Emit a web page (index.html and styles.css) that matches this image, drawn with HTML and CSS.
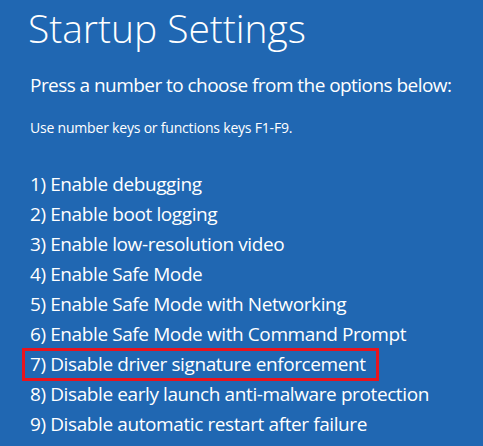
FILE: index.html
```html
<!DOCTYPE html>
<html>
<head>
<meta charset="utf-8">
<link rel="stylesheet" href="styles.css">
</head>
<body>
<main class="screen">
  <h1 class="title">Startup Settings</h1>
  <p class="lead">Press a number to choose from the options below:</p>
  <p class="hint">Use number keys or functions keys F1-F9.</p>
  <ol class="options">
    <li class="option">1) Enable debugging</li>
    <li class="option">2) Enable boot logging</li>
    <li class="option">3) Enable low-resolution video</li>
    <li class="option">4) Enable Safe Mode</li>
    <li class="option">5) Enable Safe Mode with Networking</li>
    <li class="option">6) Enable Safe Mode with Command Prompt</li>
    <li class="option option-marked">7) Disable driver signature enforcement</li>
    <li class="option">8) Disable early launch anti-malware protection</li>
    <li class="option">9) Disable automatic restart after failure</li>
  </ol>
</main>
</body>
</html>
```

FILE: styles.css
```css
html, body {
  margin: 0;
  padding: 0;
  background: #2067b2;
}
.screen {
  width: 483px;
  height: 446px;
  overflow: hidden;
  box-sizing: border-box;
  padding: 0 0 0 28px;
  color: #ffffff;
  font-family: "Open Sans", "Noto Sans", sans-serif;
}
.title {
  margin: 0;
  padding-top: 3px;
  font-size: 39px;
  font-weight: 300;
  line-height: 50px;
  letter-spacing: -0.05px;
}
.lead {
  margin: 19px 0 0 2px;
  font-size: 19px;
  line-height: 26px;
  letter-spacing: -0.55px;
}
.hint {
  margin: 21px 0 0 2px;
  font-size: 14px;
  line-height: 18px;
  letter-spacing: -0.2px;
}
.options {
  list-style: none;
  margin: 32px 0 0 2px;
  padding: 0;
}
.option {
  font-size: 19px;
  line-height: 30px;
  height: 30px;
  letter-spacing: -0.4px;
}
.option-marked {
  position: relative;
}
.option-marked::before {
  content: "";
  position: absolute;
  top: -1px;
  bottom: -2px;
  left: -8px;
  width: 357px;
  border: 3px solid #e8141e;
  box-sizing: border-box;
}
```
